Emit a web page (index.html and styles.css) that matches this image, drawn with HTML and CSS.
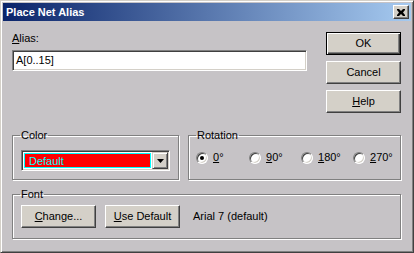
FILE: index.html
```html
<!DOCTYPE html>
<html>
<head>
  <meta charset="UTF-8">
  <title>Place Net Alias</title>
  <link rel="stylesheet" href="styles.css">
</head>
<body>

<div class="window">

  <!-- title bar -->
  <div class="titlebar">
    <span class="title">Place Net Alias</span>
    <span class="close-btn">
      <svg width="8" height="7" viewBox="0 0 8 7">
        <path d="M0 0h2l2 2l2-2h2v1l-2 2.5l2 2.5v1h-2l-2-2l-2 2h-2v-1l2-2.5l-2-2.5z" fill="#000"/>
      </svg>
    </span>
  </div>

  <div class="dialog">

    <div class="top-row">
      <div class="alias-col">
        <label class="field-label"><u>A</u>lias:</label>
        <div class="textbox">A[0..15]</div>
      </div>
      <div class="button-col">
        <div class="btn btn-default">OK</div>
        <div class="btn">Cancel</div>
        <div class="btn"><u>H</u>elp</div>
      </div>
    </div>

    <div class="group-row">
      <fieldset class="group group-color">
        <legend>Color</legend>
        <div class="combo">
          <div class="combo-value"><span>Default</span></div>
          <div class="combo-arrow">
            <svg width="7" height="4" viewBox="0 0 7 4"><path d="M0 0h7l-3.5 4z" fill="#000"/></svg>
          </div>
        </div>
      </fieldset>

      <fieldset class="group group-rotation">
        <legend>Rotation</legend>
        <div class="radio-list">
          <label class="opt opt-first"><span class="radio checked"></span><span><u>0</u>°</span></label>
          <label class="opt"><span class="radio"></span><span><u>9</u>0°</span></label>
          <label class="opt"><span class="radio"></span><span><u>1</u>80°</span></label>
          <label class="opt opt-last"><span class="radio"></span><span><u>2</u>70°</span></label>
        </div>
      </fieldset>
    </div>

    <fieldset class="group group-font">
      <legend>Font</legend>
      <div class="font-row">
        <div class="btn"><u>C</u>hange...</div>
        <div class="btn"><u>U</u>se Default</div>
        <span class="font-name">Arial 7 (default)</span>
      </div>
    </fieldset>

  </div>
</div>

</body>
</html>
```

FILE: styles.css
```css
body {
  margin: 0;
  background: #c6c3c6;
  font-family: "Liberation Sans", Arial, sans-serif;
  font-size: 11px;
  line-height: 13px;
  color: #000;
}

.window {
  width: 414px;
  height: 253px;
  box-sizing: border-box;
  background: #c6c3c6;
  border: 1px solid;
  border-color: #d4d0c8 #404040 #404040 #d4d0c8;
  box-shadow: inset 1px 1px #fff, inset -1px -1px #808080;
  padding: 2px;
}

.titlebar {
  height: 18px;
  display: flex;
  align-items: center;
  justify-content: space-between;
  padding: 0 2px 0 3px;
  background: linear-gradient(to right, #0a246a, #a6caf0);
}

.title {
  color: #fff;
  font-weight: bold;
  font-size: 11px;
}

.close-btn {
  width: 16px;
  height: 14px;
  box-sizing: border-box;
  display: flex;
  align-items: center;
  justify-content: center;
  background: #d4d0c8;
  border: 1px solid;
  border-color: #fff #404040 #404040 #fff;
  box-shadow: inset -1px -1px #808080;
}

.dialog {
  padding: 11px 10px 0 9px;
}

.top-row {
  display: flex;
  justify-content: space-between;
}

.alias-col {
  display: flex;
  flex-direction: column;
}

.field-label {
  display: block;
  height: 13px;
  margin-bottom: 5px;
}

.textbox {
  width: 295px;
  height: 21px;
  box-sizing: border-box;
  background: #fff;
  border: 1px solid;
  border-color: #808080 #fff #fff #808080;
  box-shadow: inset 1px 1px #404040, inset -1px -1px #d4d0c8;
  padding: 3px 3px 0;
}

.button-col {
  display: flex;
  flex-direction: column;
  gap: 6px;
}

.btn {
  width: 75px;
  height: 23px;
  box-sizing: border-box;
  display: flex;
  align-items: center;
  justify-content: center;
  background: #d4d0c8;
  border: 1px solid;
  border-color: #fff #404040 #404040 #fff;
  box-shadow: inset -1px -1px #808080;
  padding-bottom: 1px;
}

.btn-default {
  border: 1px solid #000;
  box-shadow: inset 1px 1px #fff, inset -1px -1px #404040, inset -2px -2px #808080;
}

.group {
  margin: 0;
  padding: 8px 8px 8px 8px;
  border: 1px solid #808080;
  box-shadow: inset 1px 1px #fff, 1px 1px #fff;
  min-width: 0;
}

.group legend {
  padding: 0 1px;
  margin-left: -1px;
  line-height: 13px;
}

.group-row {
  display: flex;
  gap: 9px;
  margin-top: 16px;
}

.group-color {
  width: 167px;
  box-sizing: border-box;
}

.group-rotation {
  flex: 1;
  padding-left: 7px;
}

.group-rotation legend {
  margin-left: 0;
}

.combo {
  width: 149px;
  height: 21px;
  box-sizing: border-box;
  display: flex;
  background: #fff;
  border: 1px solid;
  border-color: #808080 #fff #fff #808080;
  box-shadow: inset 1px 1px #404040, inset -1px -1px #d4d0c8;
  padding: 2px;
}

.combo-value {
  flex: 1;
  background: #f00;
  border: 1px solid #0ff;
  color: #0ff;
  padding: 1px 0 0 4px;
  margin-right: 1px;
}

.combo-arrow {
  width: 16px;
  box-sizing: border-box;
  display: flex;
  align-items: center;
  justify-content: center;
  background: #d4d0c8;
  border: 1px solid;
  border-color: #d4d0c8 #404040 #404040 #d4d0c8;
  box-shadow: inset 1px 1px #fff, inset -1px -1px #808080;
  margin: -1px -1px -1px 0;
}

.radio-list {
  display: flex;
  padding-top: 1px;
}

.opt {
  width: 52px;
  flex-shrink: 0;
  display: flex;
  align-items: center;
  gap: 5px;
}

.opt-first {
  width: 53px;
}

.opt-last {
  width: auto;
}

.radio {
  width: 12px;
  height: 12px;
  box-sizing: border-box;
  border-radius: 50%;
  background: #fff;
  border: 1px solid;
  border-color: #808080 #fff #fff #808080;
  box-shadow: inset 1px 1px #404040, inset -1px -1px #d4d0c8;
  display: flex;
  align-items: center;
  justify-content: center;
}

.radio.checked::after {
  content: "";
  width: 4px;
  height: 4px;
  border-radius: 50%;
  background: #000;
}

.group-font {
  margin-top: 8px;
  padding: 4px 8px 10px;
}

.font-row {
  display: flex;
  align-items: center;
  gap: 9px;
}

.font-name {
  margin-left: 4px;
}
```
